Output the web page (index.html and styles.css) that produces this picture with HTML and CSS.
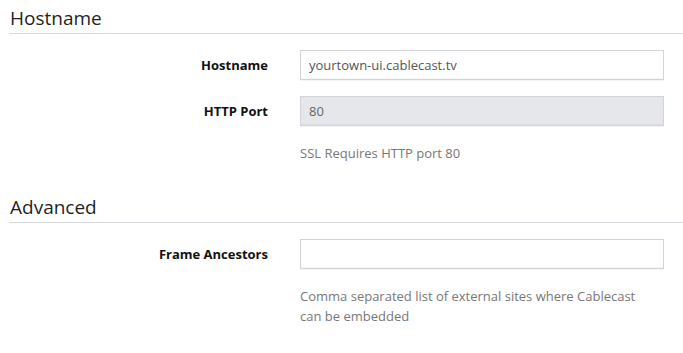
FILE: index.html
```html
<!DOCTYPE html>
<html lang="en">
<head>
<meta charset="utf-8">
<title>Settings</title>
<link rel="stylesheet" href="styles.css">
</head>
<body>
<div class="page">
  <section class="fieldset">
    <h2 class="legend">Hostname</h2>
    <div class="form-group">
      <label class="label" for="hostname">Hostname</label>
      <input class="input" id="hostname" type="text" value="yourtown-ui.cablecast.tv">
    </div>
    <div class="form-group">
      <label class="label" for="port">HTTP Port</label>
      <input class="input" id="port" type="text" value="80" disabled>
      <p class="help">SSL Requires HTTP port 80</p>
    </div>
  </section>
  <section class="fieldset">
    <h2 class="legend">Advanced</h2>
    <div class="form-group">
      <label class="label" for="frame">Frame Ancestors</label>
      <input class="input" id="frame" type="text" value="">
      <p class="help">Comma separated list of external sites where Cablecast can be embedded</p>
    </div>
  </section>
</div>
</body>
</html>
```
FILE: styles.css
```css
html, body {
  margin: 0;
  padding: 0;
  background: #ffffff;
}

body {
  font-family: "Open Sans", "Noto Sans", sans-serif;
  font-size: 13px;
  color: #333333;
}

.page {
  padding: 3px 0 0 9px;
}

.fieldset {
  margin-bottom: 29px;
}

.legend {
  margin: 0 0 16px 0;
  font-size: 19px;
  font-weight: 400;
  line-height: 30px;
  color: #1f1f1f;
  border-bottom: 1px solid #d8d8de;
  padding-left: 1px;
}

.form-group {
  display: grid;
  grid-template-columns: 259px 364px;
  column-gap: 32px;
  margin-bottom: 16px;
}

.fieldset .form-group:last-child {
  margin-bottom: 0;
}

.label {
  text-align: right;
  font-weight: 700;
  line-height: 30px;
  color: #111111;
}

.input {
  box-sizing: border-box;
  height: 30px;
  width: 364px;
  margin: 0;
  padding: 0 8px;
  border: 1px solid #d3d3da;
  border-radius: 0;
  background: #ffffff;
  font-family: inherit;
  font-size: 13px;
  color: #555555;
  box-shadow: inset 0 -1px 1px rgba(0, 0, 0, 0.04), 0 1px 1px rgba(0, 0, 0, 0.04);
  outline: none;
}

.input:disabled {
  background: #e6e7eb;
  color: #666666;
}

.help {
  grid-column: 2;
  max-width: 345px;
  margin: 17px 0 0 0;
  line-height: 20px;
  color: #777777;
}
```
